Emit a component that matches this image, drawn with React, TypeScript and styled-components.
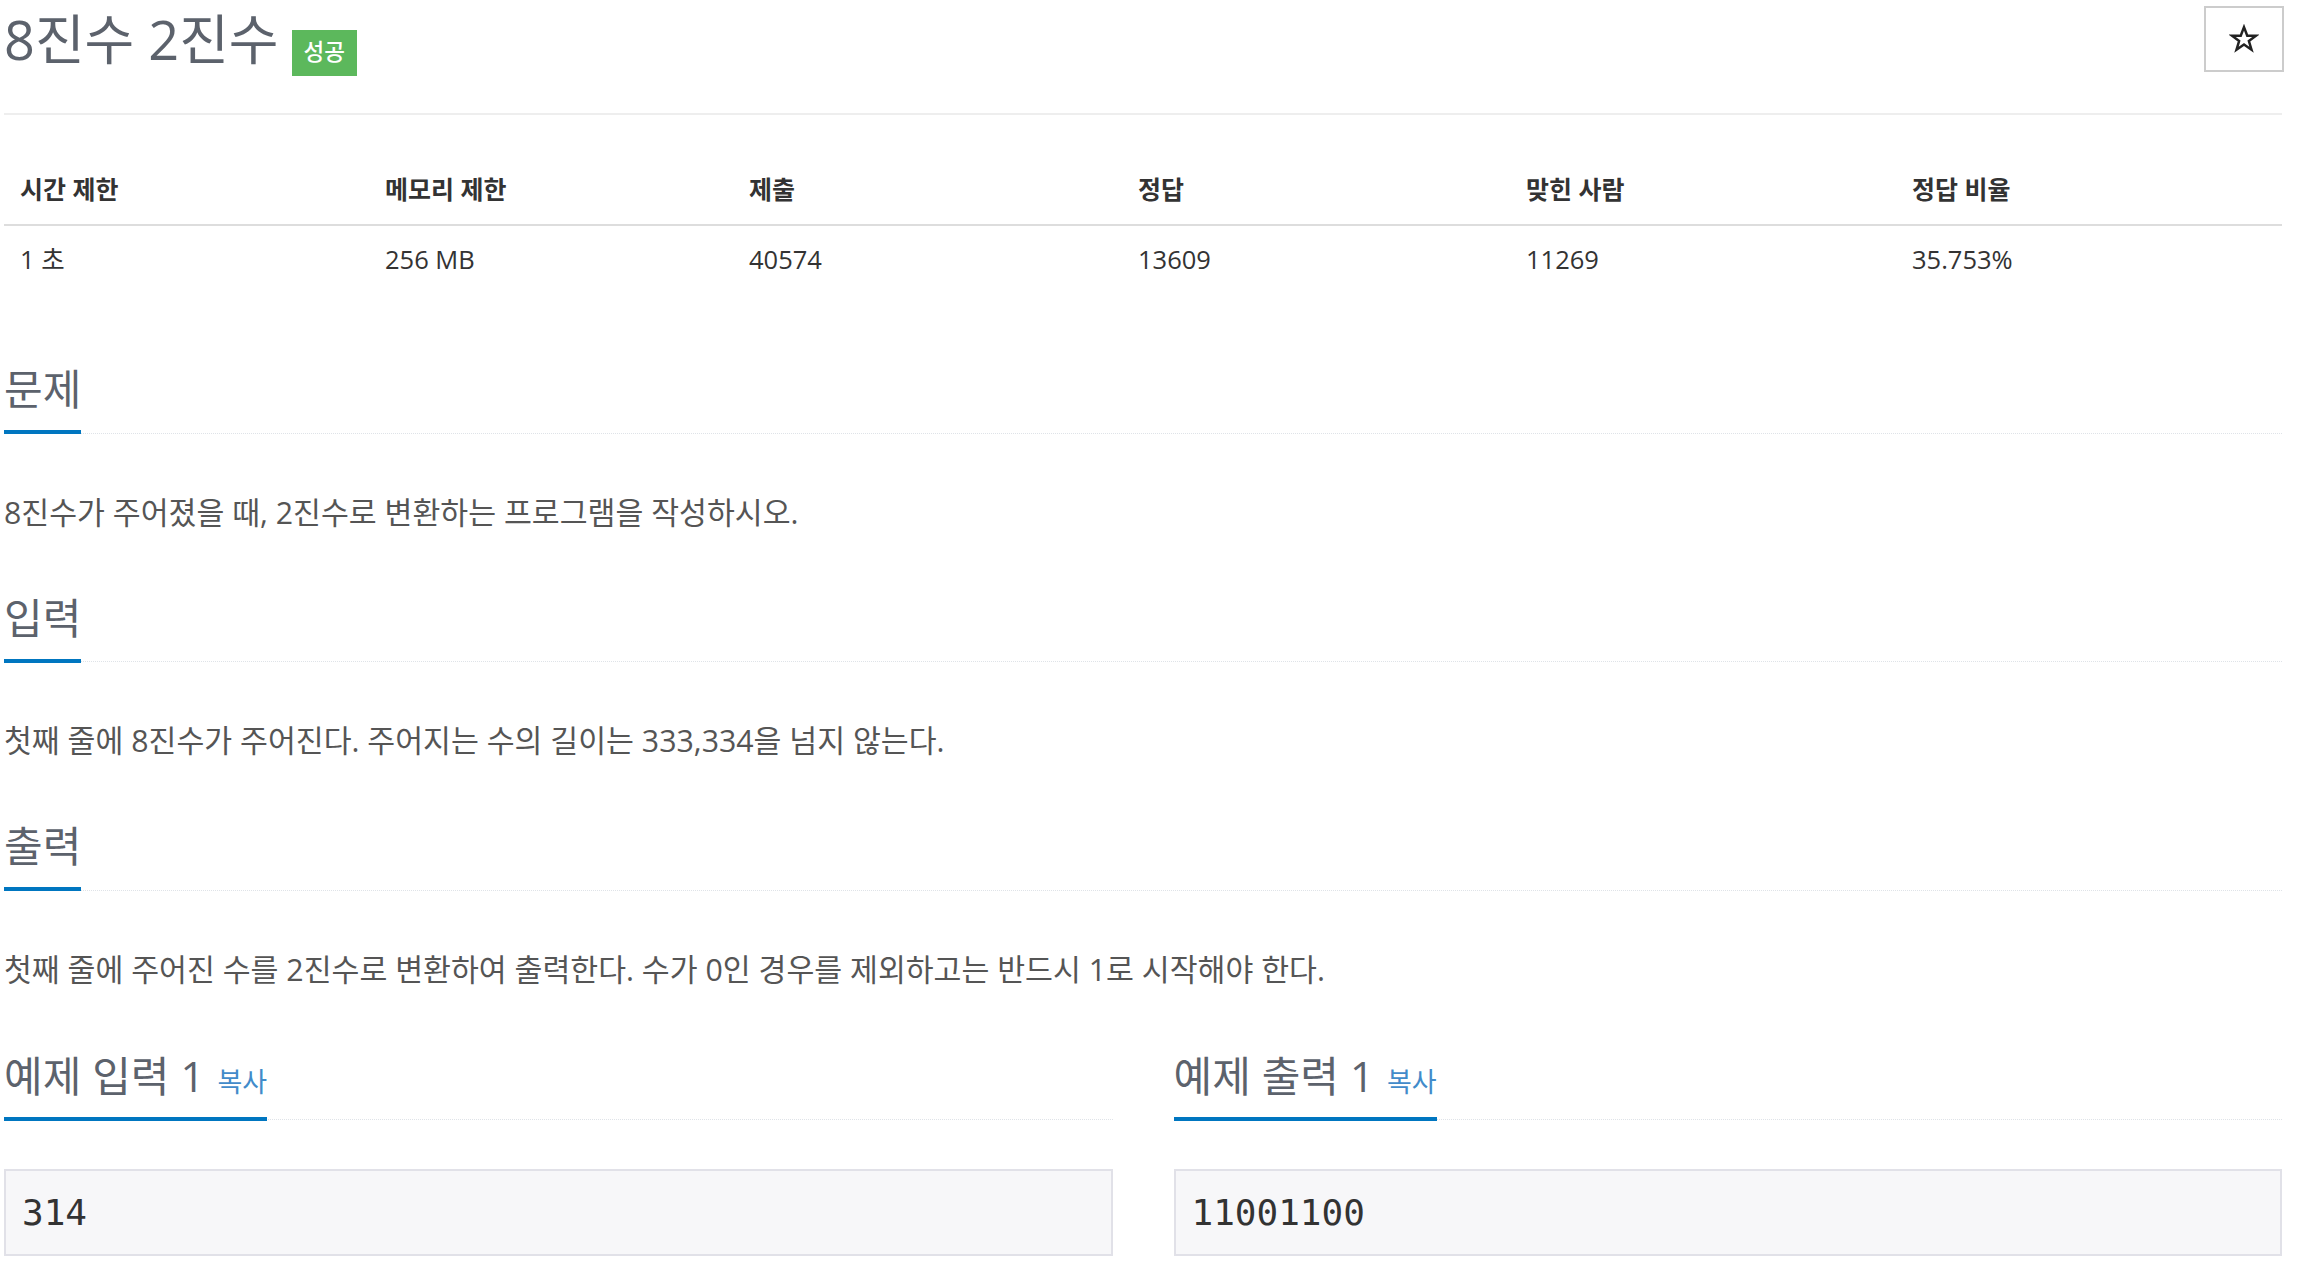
import React from 'react'
import styled, { createGlobalStyle } from 'styled-components'

const GlobalStyle = createGlobalStyle`
  body {
    margin: 0;
    background: #fff;
    font-family: "Open Sans", "Noto Sans CJK KR", sans-serif;
    color: #333;
  }
`

const Page = styled.div`
  width: 2278px;
  padding-left: 4px;
`
const Header = styled.div`
  display: flex;
  align-items: center;
  justify-content: space-between;
  height: 78px;
  padding-bottom: 35px;
  border-bottom: 2px solid #eee;
`
const Title = styled.h1`
  display: flex;
  align-items: baseline;
  gap: 13px;
  margin: 0;
  font-size: 54px;
  font-weight: 400;
  line-height: 78px;
  color: #5c626c;
`
const Badge = styled.span`
  display: inline-block;
  background: #5cb85c;
  color: #fff;
  font-size: 22.5px;
  font-weight: 500;
  line-height: 1;
  padding: 11px 12px 12.5px;
`
const StarButton = styled.button`
  width: 80px;
  height: 66px;
  margin-right: -2px;
  background: #fff;
  border: 2px solid #ccc;
  display: flex;
  align-items: center;
  justify-content: center;
  padding: 0;
  cursor: pointer;
`
const InfoTable = styled.table`
  width: 100%;
  border-collapse: collapse;
  margin-top: 38px;
  font-size: 25.5px;
  color: #333;
`
const Th = styled.th`
  text-align: left;
  font-size: 25px;
  font-weight: 700;
  padding: 12px 16px 11px;
  line-height: 48px;
  border-bottom: 2px solid #ddd;
`
const Td = styled.td`
  padding: 9px 16px 15px;
  line-height: 48px;
`
const Section = styled.section<{ $top?: number }>`
  margin-top: ${({ $top }) => $top ?? 0}px;
`
const Headline = styled.div`
  border-bottom: 1.5px dotted #dfe3e8;
  display: flex;
`
const H2 = styled.h2`
  display: flex;
  align-items: baseline;
  gap: 13px;
  margin: 0 0 -1.5px;
  font-size: 42px;
  font-weight: 400;
  line-height: 50px;
  color: #5c626c;
  padding-bottom: 16px;
  border-bottom: 4.5px solid #0076c0;
`
const CopyLink = styled.a`
  font-size: 27px;
  line-height: 1;
  color: #428bca;
  cursor: pointer;
`
const Text = styled.p`
  margin: 57px 0 59px;
  font-size: 30.3px;
  line-height: 43px;
  color: #555;
`
const Samples = styled.div`
  display: grid;
  grid-template-columns: 1fr 1fr;
  gap: 61px;
  padding-top: 1px;
`
const Pre = styled.pre`
  margin: 49px 0 0;
  padding: 16px 16px;
  background: #f7f7f9;
  border: 2px solid #e1e1e8;
  font-family: "DejaVu Sans Mono", "Liberation Mono", monospace;
  font-size: 36px;
  line-height: 51px;
  color: #333;
`

const heads = ['시간 제한', '메모리 제한', '제출', '정답', '맞힌 사람', '정답 비율']
const values = ['1 초', '256 MB', '40574', '13609', '11269', '35.753%']
const widths = [365, 364, 389, 388, 386, 386]

const sections = [
  { title: '문제', body: '8진수가 주어졌을 때, 2진수로 변환하는 프로그램을 작성하시오.' },
  { title: '입력', body: '첫째 줄에 8진수가 주어진다. 주어지는 수의 길이는 333,334을 넘지 않는다.' },
  { title: '출력', body: '첫째 줄에 주어진 수를 2진수로 변환하여 출력한다. 수가 0인 경우를 제외하고는 반드시 1로 시작해야 한다.' },
]

const App = () => {
  return (
    <Page>
      <GlobalStyle />
      <Header>
        <Title>
          8진수 2진수
          <Badge>성공</Badge>
        </Title>
        <StarButton>
          <svg width="30" height="30" viewBox="0 0 24 24" fill="none" stroke="#222" strokeWidth="2" strokeLinejoin="miter">
            <polygon points="12,2.5 14.6,9.3 21.6,9.3 15.9,13.6 18,20.6 12,16.4 6,20.6 8.1,13.6 2.4,9.3 9.4,9.3" />
          </svg>
        </StarButton>
      </Header>
      <InfoTable>
        <colgroup>
          {widths.map((w, i) => <col key={i} style={{ width: w }} />)}
        </colgroup>
        <thead>
          <tr>{heads.map(h => <Th key={h}>{h}</Th>)}</tr>
        </thead>
        <tbody>
          <tr>{values.map(v => <Td key={v}>{v}</Td>)}</tr>
        </tbody>
      </InfoTable>
      {sections.map((s, i) => (
        <Section key={s.title} $top={i === 0 ? 66 : 0}>
          <Headline><H2>{s.title}</H2></Headline>
          <Text>{s.body}</Text>
        </Section>
      ))}
      <Samples>
        <div>
          <Headline><H2>예제 입력 1<CopyLink>복사</CopyLink></H2></Headline>
          <Pre>314</Pre>
        </div>
        <div>
          <Headline><H2>예제 출력 1<CopyLink>복사</CopyLink></H2></Headline>
          <Pre>11001100</Pre>
        </div>
      </Samples>
    </Page>
  )
}

export default App
